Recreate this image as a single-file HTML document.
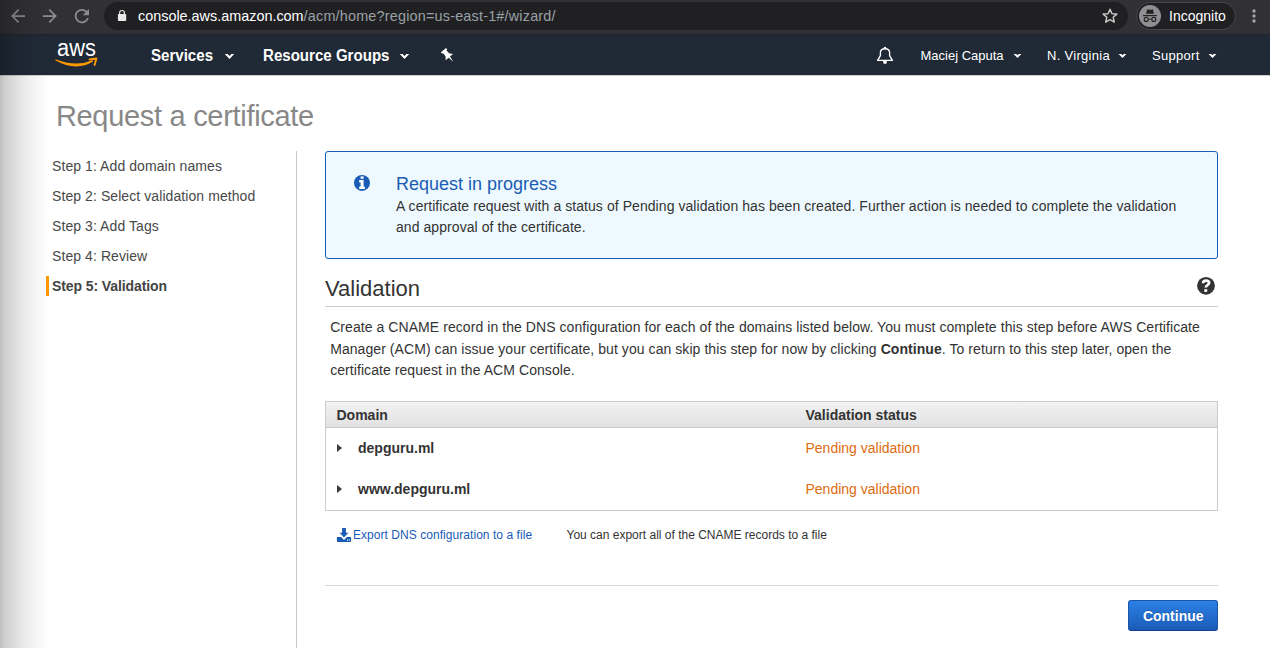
<!DOCTYPE html>
<html><head><meta charset="utf-8">
<style>
*{margin:0;padding:0;box-sizing:border-box}
html,body{width:1270px;height:648px;overflow:hidden;background:#fff;font-family:"Liberation Sans",sans-serif}
.a{position:absolute;white-space:nowrap;line-height:1}
#chrome{position:absolute;left:0;top:0;width:1270px;height:35px;background:#313035;border-bottom:1px solid #222126}
#pill{position:absolute;left:104px;top:2px;width:1023.5px;height:28px;border-radius:14px;background:#202023}
#incog{position:absolute;left:1136px;top:2px;width:100px;height:28px;border-radius:14px;background:#202023;border:1px solid #47464b}
#nav{position:absolute;left:0;top:35px;width:1270px;height:40px;background:#202a37;box-shadow:0 1px 0 #d2d2d2}
.nv{color:#fff;font-size:16px;font-weight:700;transform:scaleX(0.942);transform-origin:0 0}
.nr{color:#fff;font-size:13px}
#shadow{position:absolute;left:0;top:0;width:60px;height:648px;background:linear-gradient(to right,rgba(0,0,0,.25) 0px,rgba(0,0,0,.2) 4px,rgba(0,0,0,.16) 10px,rgba(0,0,0,.1) 20px,rgba(0,0,0,.058) 30px,rgba(0,0,0,.026) 40px,rgba(0,0,0,0) 50px)}
.step{font-size:14px;color:#484848;letter-spacing:0.08px}
#divider{position:absolute;left:296px;top:151px;width:1px;height:497px;background:#c8c8c8}
#info{position:absolute;left:325px;top:151px;width:893px;height:108px;border:1px solid #1a5db5;border-radius:3px;background:#eef9ff}
.body{font-size:14px;color:#333;letter-spacing:0.065px}
#rule1{position:absolute;left:325px;top:306px;width:893px;height:1px;background:#ccc}
#table{position:absolute;left:325px;top:401px;width:893px;height:110px;border:1px solid #ccc}
#thead{position:absolute;left:0;top:0;width:891px;height:26px;background:linear-gradient(#f2f2f2,#e1e1e1);border-bottom:1px solid #c6c6c6}
.tri{position:absolute;width:0;height:0;border-top:4.7px solid transparent;border-bottom:4.7px solid transparent;border-left:5.5px solid #3a3a3a}
#rule2{position:absolute;left:325px;top:585px;width:893px;height:1px;background:#d6d6d6}
#btn{position:absolute;left:1128px;top:600px;width:90px;height:31px;border-radius:3px;border:1px solid #1b55a8;border-bottom-color:#0f3f8a;background:linear-gradient(#2c80e6,#1b5bb7)}
</style></head><body>
<div id="chrome"></div>
<!-- back / fwd / reload -->
<svg class="a" style="left:0;top:0" width="100" height="34" viewBox="0 0 100 34">
 <g fill="#8c8d90">
  <path transform="translate(7.5,5.5) scale(0.875)" d="M20 11H7.83l5.59-5.59L12 4l-8 8 8 8 1.41-1.41L7.83 13H20v-2z"/>
  <path transform="translate(39.4,5.5) scale(0.875)" d="M12 4l-1.41 1.41L16.17 11H4v2h12.17l-5.58 5.59L12 20l8-8z"/>
  <path transform="translate(71.25,5.45) scale(0.8875)" d="M17.65 6.35C16.2 4.9 14.21 4 12 4c-4.42 0-7.99 3.58-7.99 8s3.57 8 7.99 8c3.73 0 6.84-2.55 7.73-6h-2.08c-.82 2.33-3.04 4-5.65 4-3.31 0-6-2.69-6-6s2.69-6 6-6c1.66 0 3.14.69 4.22 1.78L13 11h7V4l-2.35 2.35z"/>
 </g>
</svg>
<div id="pill"></div>
<!-- lock -->
<svg class="a" style="left:117px;top:9px" width="10" height="13" viewBox="0 0 10 13">
 <path d="M2.6 5.5V3.9a2.4 2.4 0 0 1 4.8 0v1.6" fill="none" stroke="#e8e8e8" stroke-width="1.2"/>
 <rect x="0.9" y="5" width="8.3" height="7" rx="0.8" fill="#e8e8e8"/>
</svg>
<div class="a" style="left:138px;top:8.8px;font-size:14.4px;color:#fff">console.aws.amazon.com<span style="color:#9aa0a6;letter-spacing:0.2px">/acm/home?region=us-east-1#/wizard/</span></div>
<!-- star -->
<svg class="a" style="left:1102px;top:8px" width="16" height="16" viewBox="0 0 16 16">
 <path d="M8 1.2l2 4.5 4.8.4-3.6 3.2 1.1 4.8L8 11.6l-4.3 2.5 1.1-4.8L1.2 6.1l4.8-.4z" fill="none" stroke="#c4c7c5" stroke-width="1.5" stroke-linejoin="round"/>
</svg>
<div id="incog"></div>
<svg class="a" style="left:1139px;top:5px" width="22" height="22" viewBox="0 0 22 22">
 <circle cx="11" cy="11" r="11" fill="#8f8f92"/>
 <path d="M7 8.8h8l-1.2-4.6-1.8.6h-2l-1.8-.6z" fill="#222"/>
 <rect x="4" y="10" width="13.8" height="1.2" fill="#222"/>
 <circle cx="7.2" cy="14.4" r="2" fill="none" stroke="#222" stroke-width="1.1"/>
 <circle cx="14.8" cy="14.4" r="2" fill="none" stroke="#222" stroke-width="1.1"/>
 <path d="M9.2 14.2h3.6" stroke="#222" stroke-width="0.9"/>
</svg>
<div class="a" style="left:1169px;top:9.3px;font-size:14px;color:#fff">Incognito</div>
<svg class="a" style="left:1250.8px;top:8.1px" width="6" height="18" viewBox="0 0 6 18">
 <circle cx="3" cy="3" r="1.7" fill="#a4a4a6"/><circle cx="3" cy="8" r="1.7" fill="#a4a4a6"/><circle cx="3" cy="13" r="1.7" fill="#a4a4a6"/>
</svg>

<div id="nav"></div>
<!-- aws logo -->
<div class="a" style="left:56.8px;top:37px;font-size:23.5px;color:#fff;transform:scaleX(0.93);transform-origin:0 0">aws</div>
<svg class="a" style="left:0;top:0" width="110" height="75" viewBox="0 0 110 75">
 <path d="M55.3 59.3Q76 67.2 92.6 60.2L93.2 61.6Q76 71.8 55.6 60.6Z" fill="#f90"/>
 <path d="M89.6 59.5L96.4 58.5L94.6 65" fill="none" stroke="#f90" stroke-width="1.9" stroke-linejoin="round" stroke-linecap="round"/>
</svg>
<div class="a nv" style="left:151.3px;top:48px">Services</div>
<svg class="a" style="left:220px;top:50px" width="20" height="12" viewBox="220 50 20 12"><path d="M224.8 54H227.6L229.5 55.9L231.4 54H234.2L229.5 59.1Z" fill="#fff"/></svg>
<div class="a nv" style="left:262.7px;top:48px">Resource Groups</div>
<svg class="a" style="left:395px;top:50px" width="20" height="12" viewBox="395 50 20 12"><path d="M399.8 54H402.6L404.5 55.9L406.4 54H409.2L404.5 59.1Z" fill="#fff"/></svg>
<!-- pin -->
<svg class="a" style="left:430px;top:40px" width="36" height="30" viewBox="0 0 36 30">
 <path transform="translate(18.3,15.9) rotate(-40) scale(1.0)" d="M-3.4 -7.5H3.4V-5.6H2.3V-1.6L4.8 1.6H0.8L0 8L-0.8 1.6H-4.8L-2.3 -1.6V-5.6H-3.4Z" fill="#fff"/>
</svg>
<!-- bell -->
<svg class="a" style="left:868px;top:40px" width="36" height="30" viewBox="868 40 36 30">
 <path d="M877.6 60.4L880.4 55.6V52.6C880.4 50.2 882.3 48.7 885 48.7C887.7 48.7 889.6 50.2 889.6 52.6V55.6L892.4 60.4Z" fill="none" stroke="#fff" stroke-width="1.35" stroke-linejoin="round"/>
 <circle cx="885" cy="48" r="1.2" fill="#fff"/>
 <path d="M883.2 61H886.8V62.2A1.8 1.8 0 0 1 883.2 62.2Z" fill="#fff"/>
</svg>
<div class="a nr" style="left:920.5px;top:49px">Maciej Caputa</div>
<svg class="a" style="left:1013px;top:53px" width="9" height="6" viewBox="0 0 9 6"><path d="M0.6 1H3.3L4.5 2.3L5.7 1H8.4L4.5 5Z" fill="#fff"/></svg>
<div class="a nr" style="left:1047px;top:49px;letter-spacing:0.3px">N. Virginia</div>
<svg class="a" style="left:1118px;top:53px" width="9" height="6" viewBox="0 0 9 6"><path d="M0.6 1H3.3L4.5 2.3L5.7 1H8.4L4.5 5Z" fill="#fff"/></svg>
<div class="a nr" style="left:1152px;top:49px;letter-spacing:0.3px">Support</div>
<svg class="a" style="left:1208px;top:53px" width="9" height="6" viewBox="0 0 9 6"><path d="M0.6 1H3.3L4.5 2.3L5.7 1H8.4L4.5 5Z" fill="#fff"/></svg>


<div class="a" style="left:55.9px;top:101.9px;font-size:29px;color:#888;letter-spacing:-0.3px">Request a certificate</div>
<div class="a step" style="left:52px;top:159px">Step 1: Add domain names</div>
<div class="a step" style="left:52px;top:189px">Step 2: Select validation method</div>
<div class="a step" style="left:52px;top:219px">Step 3: Add Tags</div>
<div class="a step" style="left:52px;top:249px">Step 4: Review</div>
<div class="a" style="left:46px;top:276px;width:3px;height:20px;background:#f90"></div>
<div class="a step" style="left:52px;top:279px;font-weight:700;color:#444;letter-spacing:-0.1px">Step 5: Validation</div>
<div id="divider"></div>

<div id="info"></div>
<svg class="a" style="left:350px;top:172px" width="24" height="22" viewBox="350 172 24 22">
 <circle cx="362" cy="182.9" r="8" fill="#1a5bb5"/>
 <rect x="360.6" y="176.4" width="3" height="2.4" fill="#fff"/>
 <path d="M359.2 180.1H363.6V186.6H364.9V189.1H359.2V186.6H360.6V182.4H359.2Z" fill="#fff"/>
</svg>
<div class="a" style="left:396px;top:174.6px;font-size:18px;color:#1a5bb5">Request in progress</div>
<div class="a body" style="left:396px;top:198.8px">A certificate request with a status of Pending validation has been created. Further action is needed to complete the validation</div>
<div class="a body" style="left:396px;top:220px">and approval of the certificate.</div>

<div class="a" style="left:325px;top:278.3px;font-size:22px;color:#333">Validation</div>
<svg class="a" style="left:1190px;top:270px" width="34" height="34" viewBox="1190 270 34 34">
 <circle cx="1206" cy="285.8" r="8.9" fill="#333"/>
 <path d="M1203.1 283.3C1203.1 281.5 1204.4 280.6 1206.1 280.6C1207.8 280.6 1209.1 281.6 1209.1 283C1209.1 284.9 1205.8 285.2 1205.8 287.6" fill="none" stroke="#fff" stroke-width="2.7"/>
 <rect x="1204.3" y="289.2" width="2.9" height="2.7" fill="#fff"/>
</svg>
<div id="rule1"></div>

<div class="a body" style="left:330.2px;top:320px">Create a CNAME record in the DNS configuration for each of the domains listed below. You must complete this step before AWS Certificate</div>
<div class="a body" style="left:330.2px;top:341.6px">Manager (ACM) can issue your certificate, but you can skip this step for now by clicking <b>Continue</b>. To return to this step later, open the</div>
<div class="a body" style="left:330.2px;top:362.6px">certificate request in the ACM Console.</div>

<div id="table"><div id="thead"></div></div>
<div class="a" style="left:336.5px;top:408.2px;font-size:14px;font-weight:700;color:#333">Domain</div>
<div class="a" style="left:805.5px;top:408.2px;font-size:14px;font-weight:700;color:#333">Validation status</div>
<div class="tri" style="left:337px;top:444.3px"></div>
<div class="a" style="left:358px;top:441.2px;font-size:14px;font-weight:700;color:#333">depguru.ml</div>
<div class="a" style="left:805.5px;top:441.2px;font-size:14px;color:#dd6b10">Pending validation</div>
<div class="tri" style="left:337px;top:485.3px"></div>
<div class="a" style="left:358px;top:482.2px;font-size:14px;font-weight:700;color:#333">www.depguru.ml</div>
<div class="a" style="left:805.5px;top:482.2px;font-size:14px;color:#dd6b10">Pending validation</div>

<svg class="a" style="left:330px;top:520px" width="30" height="30" viewBox="330 520 30 30">
 <rect x="342.1" y="528" width="3.8" height="5.2" fill="#1a5bb5"/>
 <path d="M339.6 532.7H348.4L344 537.4Z" fill="#1a5bb5"/>
 <path d="M336.9 537.1H341.2L344 539.9L346.8 537.1H351.1V541.2Q351.1 541.9 350.4 541.9H337.6Q336.9 541.9 336.9 541.2Z" fill="#1a5bb5"/>
 <rect x="347.1" y="539.3" width="0.9" height="1.6" fill="#fff" opacity="0.8"/><rect x="348.8" y="539.3" width="0.9" height="1.6" fill="#fff" opacity="0.8"/>
</svg>
<div class="a" style="left:353px;top:528.8px;font-size:12px;color:#1a5bb5;letter-spacing:0.05px">Export DNS configuration to a file</div>
<div class="a" style="left:566.5px;top:528.8px;font-size:12px;color:#333">You can export all of the CNAME records to a file</div>
<div id="rule2"></div>

<div id="btn"></div>
<div class="a" style="left:1142.8px;top:608px;font-size:15px;font-weight:700;color:#fff;text-shadow:0 -1px 0 rgba(0,0,0,.2);transform:scaleX(0.93);transform-origin:0 0">Continue</div>
<div id="shadow"></div>
</body></html>
